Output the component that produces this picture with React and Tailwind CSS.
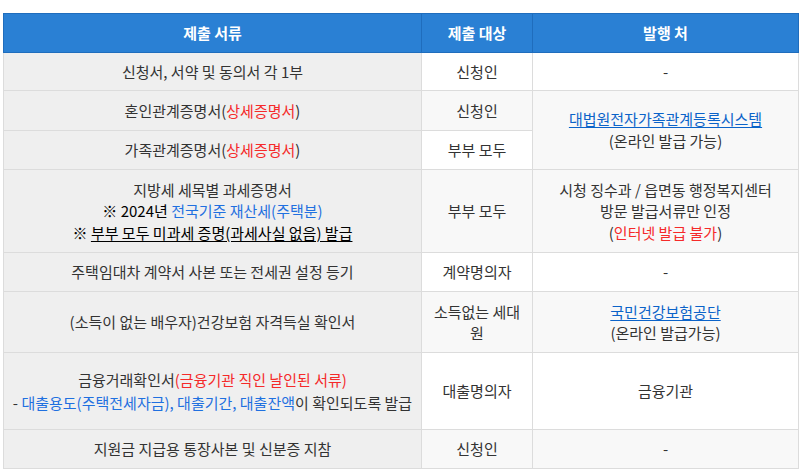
import React from 'react'

// 제출 서류 안내 표
const th = 'border border-[#1f6dbd] bg-[#2a80d4] text-white font-bold text-center align-middle'
const c1 = 'border border-[#dcdcdc] bg-[#efefef] text-center align-middle px-[6px]'
const c2 = 'border border-[#dcdcdc] text-center align-middle px-[6px]'

const Red = ({ children }) => <span className="text-[#f52a2a]">{children}</span>
const Blue = ({ children }) => <span className="text-[#1f70e0]">{children}</span>
const Link = ({ children }) => (
  <a href="#" className="text-[#0b63c9] underline underline-offset-2">{children}</a>
)

export default function App() {
  return (
    <div className="bg-white w-[802px] h-[473px] pt-[13px] pl-[3px]">
      <table
        className="table-fixed border-collapse w-[795px] text-[15px] leading-[22px] text-[#333]"
        style={{ fontFamily: '"Noto Sans CJK KR", "Noto Sans", sans-serif' }}
      >
        <colgroup>
          <col className="w-[418px]" />
          <col className="w-[111px]" />
          <col className="w-[266px]" />
        </colgroup>
        <thead>
          <tr>
            <th className={`${th} h-[39px]`}>제출 서류</th>
            <th className={th}>제출 대상</th>
            <th className={th}>발행 처</th>
          </tr>
        </thead>
        <tbody>
          <tr>
            <td className={`${c1} h-[38px]`}>신청서, 서약 및 동의서 각 1부</td>
            <td className={`${c2} bg-white`}>신청인</td>
            <td className={`${c2} bg-white`}>-</td>
          </tr>
          <tr>
            <td className={`${c1} h-[40px]`}>
              혼인관계증명서(<Red>상세증명서</Red>)
            </td>
            <td className={`${c2} bg-[#f8f8f8]`}>신청인</td>
            <td rowSpan={2} className={`${c2} bg-[#f8f8f8]`}>
              <Link>대법원전자가족관계등록시스템</Link>
              <br />
              (온라인 발급 가능)
            </td>
          </tr>
          <tr>
            <td className={`${c1} h-[39px]`}>
              가족관계증명서(<Red>상세증명서</Red>)
            </td>
            <td className={`${c2} bg-white`}>부부 모두</td>
          </tr>
          <tr>
            <td className={`${c1} h-[83px] leading-[21.5px]`}>
              지방세 세목별 과세증명서
              <br />
              <span className="text-black">※ 2024년 </span>
              <Blue>전국기준 재산세(주택분)</Blue>
              <br />
              <span className="text-black">
                ※ <span className="underline underline-offset-2">부부 모두 미과세 증명(과세사실 없음) 발급</span>
              </span>
            </td>
            <td className={`${c2} bg-[#f8f8f8]`}>부부 모두</td>
            <td className={`${c2} bg-[#f8f8f8] leading-[21.5px]`}>
              시청 징수과 / 읍면동 행정복지센터
              <br />
              방문 발급서류만 인정
              <br />
              (<Red>인터넷 발급 불가</Red>)
            </td>
          </tr>
          <tr>
            <td className={`${c1} h-[39px]`}>주택임대차 계약서 사본 또는 전세권 설정 등기</td>
            <td className={`${c2} bg-white`}>계약명의자</td>
            <td className={`${c2} bg-white`}>-</td>
          </tr>
          <tr>
            <td className={`${c1} h-[61px]`}>(소득이 없는 배우자)건강보험 자격득실 확인서</td>
            <td className={`${c2} bg-[#f8f8f8] leading-[21px]`}>소득없는 세대원</td>
            <td className={`${c2} bg-[#f8f8f8] leading-[21px]`}>
              <Link>국민건강보험공단</Link>
              <br />
              (온라인 발급가능)
            </td>
          </tr>
          <tr>
            <td className={`${c1} h-[77px] leading-[23px]`}>
              금융거래확인서<Red>(금융기관 직인 날인된 서류)</Red>
              <br />
              - <Blue>대출용도(주택전세자금), 대출기간, 대출잔액</Blue>이 확인되도록 발급
            </td>
            <td className={`${c2} bg-white`}>대출명의자</td>
            <td className={`${c2} bg-white`}>금융기관</td>
          </tr>
          <tr>
            <td className={`${c1} h-[39px]`}>지원금 지급용 통장사본 및 신분증 지참</td>
            <td className={`${c2} bg-[#f8f8f8]`}>신청인</td>
            <td className={`${c2} bg-[#f8f8f8]`}>-</td>
          </tr>
        </tbody>
      </table>
    </div>
  )
}
